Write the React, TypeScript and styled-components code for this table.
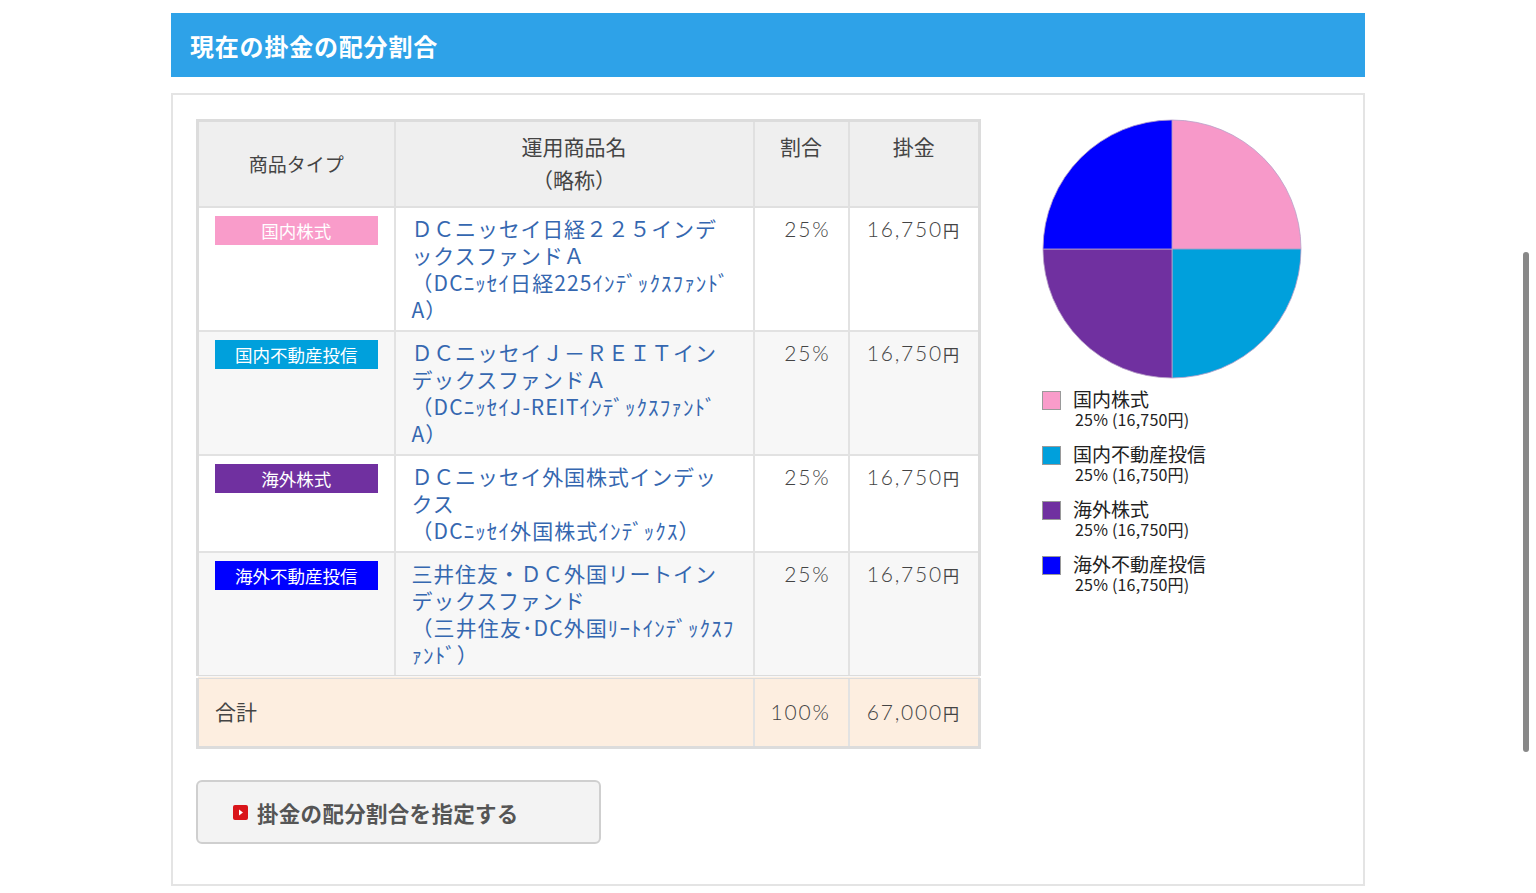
import styled, { createGlobalStyle } from "styled-components";

const GlobalStyle = createGlobalStyle`
  body {
    margin: 0;
    background: #fff;
    font-family: "Noto Sans CJK JP", "Noto Sans", sans-serif;
    color: #444;
  }
`;

type Fund = {
  type: string;
  color: string;
  name: string;
  short: string;
  ratio: number;
  amount: string;
};

const funds: Fund[] = [
  {
    type: "国内株式",
    color: "#f99cca",
    name: "ＤＣニッセイ日経２２５インデックスファンドＡ",
    short: "（DCﾆｯｾｲ日経225ｲﾝﾃﾞｯｸｽﾌｧﾝﾄﾞA）",
    ratio: 25,
    amount: "16,750",
  },
  {
    type: "国内不動産投信",
    color: "#00a0dc",
    name: "ＤＣニッセイＪ－ＲＥＩＴインデックスファンドＡ",
    short: "（DCﾆｯｾｲJ-REITｲﾝﾃﾞｯｸｽﾌｧﾝﾄﾞA）",
    ratio: 25,
    amount: "16,750",
  },
  {
    type: "海外株式",
    color: "#7030a0",
    name: "ＤＣニッセイ外国株式インデックス",
    short: "（DCﾆｯｾｲ外国株式ｲﾝﾃﾞｯｸｽ）",
    ratio: 25,
    amount: "16,750",
  },
  {
    type: "海外不動産投信",
    color: "#0000ff",
    name: "三井住友・ＤＣ外国リートインデックスファンド",
    short: "（三井住友･DC外国ﾘｰﾄｲﾝﾃﾞｯｸｽﾌｧﾝﾄﾞ）",
    ratio: 25,
    amount: "16,750",
  },
];

const Page = styled.div`
  width: 1194px;
  margin: 13px auto 0;
`;

const TitleBar = styled.h2`
  margin: 0;
  height: 64px;
  padding-left: 19px;
  display: flex;
  align-items: center;
  background: #2ea2e8;
  color: #fff;
  font-size: 24px;
  font-weight: 700;
  letter-spacing: 0.8px;
`;

const Panel = styled.div`
  margin-top: 16px;
  border: 2px solid #e4e4e4;
  padding: 24px 24px 40px 23px;
  display: flex;
  align-items: flex-start;
`;

const LeftCol = styled.div`
  width: 781px;
`;

const Table = styled.table`
  width: 780px;
  border-collapse: collapse;
  table-layout: fixed;
  border: 3px solid #dcdcdc;
  font-size: 21px;
`;

const Th = styled.th<{ $valign?: string }>`
  background: #efefef;
  font-weight: 400;
  color: #444;
  border: 2px solid #e0e0e0;
  padding: 8px 10px 10px;
  line-height: 33px;
  vertical-align: ${(p) => p.$valign || "top"};
  font-size: ${(p) => (p.$valign === "middle" ? "19px" : "21px")};
`;

const Row = styled.tr<{ $alt?: boolean }>`
  background: ${(p) => (p.$alt ? "#f7f7f7" : "#fff")};
`;

const Td = styled.td`
  border: 2px solid #e2e2e2;
  padding: 7px 16px 7px;
  line-height: 27px;
  vertical-align: top;
`;

const NumTd = styled(Td)<{ $pr?: number }>`
  text-align: right;
  color: #444;
  white-space: nowrap;
  font-family: "Lato", "Noto Sans CJK JP", sans-serif;
  font-weight: 300;
  letter-spacing: 1.8px;
  padding-right: ${(p) => p.$pr ?? 17}px;
`;

const Badge = styled.div<{ $color: string }>`
  height: 29px;
  margin-top: 1px;
  background: ${(p) => p.$color};
  color: #fff;
  font-size: 17.5px;
  line-height: 29px;
  text-align: center;
`;

const FundName = styled.a`
  color: #3567b0;
  text-decoration: none;
  letter-spacing: 0.8px;
  display: block;
`;

const ShortName = styled.span`
  letter-spacing: 1.1px;
`;

const Yen = styled.span`
  font-family: "Noto Sans CJK JP", sans-serif;
  font-weight: 400;
  font-size: 16px;
  letter-spacing: 0;
`;

const TotalRow = styled.tr`
  background: #fdeee0;
  & > td {
    border-top: 4px double #dcdcdc;
    padding-top: 19px;
    padding-bottom: 19px;
  }
`;

const ActionButton = styled.button`
  margin-top: 31px;
  width: 405px;
  height: 64px;
  display: flex;
  align-items: center;
  padding: 0 0 0 35px;
  gap: 9px;
  background: #f3f3f3;
  border: 2px solid #cfcfcf;
  border-radius: 6px;
  font-family: inherit;
  font-size: 21.5px;
  font-weight: 700;
  letter-spacing: 0.3px;
  color: #555;
  cursor: pointer;
`;

const RightCol = styled.div`
  margin-left: 65px;
  display: flex;
  flex-direction: column;
`;

const Legend = styled.ul`
  list-style: none;
  margin: 12px 0 0;
  padding: 0;
  display: flex;
  flex-direction: column;
  gap: 17px;
`;

const LegendItem = styled.li`
  display: flex;
  align-items: flex-start;
  gap: 12px;
  color: #222;
`;

const Swatch = styled.span<{ $color: string }>`
  width: 17px;
  height: 17px;
  border: 1px solid #9a9a9a;
  background: ${(p) => p.$color};
  flex: none;
`;

const LegendText = styled.div`
  display: flex;
  flex-direction: column;
  line-height: 20px;
  margin-top: -2px;
`;

const LegendLabel = styled.span`
  font-size: 19px;
`;

const LegendValue = styled.span`
  font-size: 16px;
  padding-left: 2px;
  letter-spacing: 0.2px;
`;

const ScrollThumb = styled.div`
  position: fixed;
  top: 252px;
  right: 7px;
  width: 6px;
  height: 500px;
  border-radius: 3px;
  background: #888;
`;

function PlayIcon() {
  return (
    <svg width="15" height="15" viewBox="0 0 15 15">
      <rect x="0" y="0" width="15" height="15" rx="2" fill="#d9141a" />
      <path d="M6 4.5 L10 7.5 L6 10.5 Z" fill="#fff" />
    </svg>
  );
}

function Pie() {
  const c = 129;
  const r = 128;
  const slices = [
    { d: `M${c} ${c} L${c} ${c - r} A${r} ${r} 0 0 1 ${c + r} ${c} Z`, fill: "#f799c9" },
    { d: `M${c} ${c} L${c + r} ${c} A${r} ${r} 0 0 1 ${c} ${c + r} Z`, fill: "#00a0dc" },
    { d: `M${c} ${c} L${c} ${c + r} A${r} ${r} 0 0 1 ${c - r} ${c} Z`, fill: "#7030a0" },
    { d: `M${c} ${c} L${c - r} ${c} A${r} ${r} 0 0 1 ${c} ${c - r} Z`, fill: "#0000ff" },
  ];
  return (
    <svg width="260" height="260" viewBox="0 0 258 258">
      {slices.map((s, i) => (
        <path key={i} d={s.d} fill={s.fill} stroke="#b8a0c8" strokeWidth="0.8" />
      ))}
    </svg>
  );
}

export default function App() {
  return (
    <>
      <GlobalStyle />
      <Page>
        <TitleBar>現在の掛金の配分割合</TitleBar>
        <Panel>
          <LeftCol>
            <Table>
              <colgroup>
                <col style={{ width: 197 }} />
                <col style={{ width: 359 }} />
                <col style={{ width: 95 }} />
                <col style={{ width: 131 }} />
              </colgroup>
              <thead>
                <tr>
                  <Th $valign="middle">商品タイプ</Th>
                  <Th>
                    運用商品名
                    <br />
                    （略称）
                  </Th>
                  <Th>割合</Th>
                  <Th>掛金</Th>
                </tr>
              </thead>
              <tbody>
                {funds.map((f, i) => (
                  <Row key={f.type} $alt={i % 2 === 1}>
                    <Td>
                      <Badge $color={f.color}>{f.type}</Badge>
                    </Td>
                    <Td>
                      <FundName href="#">
                        {f.name}
                        <br />
                        <ShortName>{f.short}</ShortName>
                      </FundName>
                    </Td>
                    <NumTd>{f.ratio}%</NumTd>
                    <NumTd $pr={19}>
                      {f.amount}
                      <Yen>円</Yen>
                    </NumTd>
                  </Row>
                ))}
                <TotalRow>
                  <Td colSpan={2}>合計</Td>
                  <NumTd>100%</NumTd>
                  <NumTd $pr={19}>
                    67,000<Yen>円</Yen>
                  </NumTd>
                </TotalRow>
              </tbody>
            </Table>
            <ActionButton type="button">
              <PlayIcon />
              掛金の配分割合を指定する
            </ActionButton>
          </LeftCol>
          <RightCol>
            <Pie />
            <Legend>
              {funds.map((f) => (
                <LegendItem key={f.type}>
                  <Swatch $color={f.color} />
                  <LegendText>
                    <LegendLabel>{f.type}</LegendLabel>
                    <LegendValue>
                      {f.ratio}% ({f.amount}円)
                    </LegendValue>
                  </LegendText>
                </LegendItem>
              ))}
            </Legend>
          </RightCol>
        </Panel>
      </Page>
      <ScrollThumb />
    </>
  );
}
